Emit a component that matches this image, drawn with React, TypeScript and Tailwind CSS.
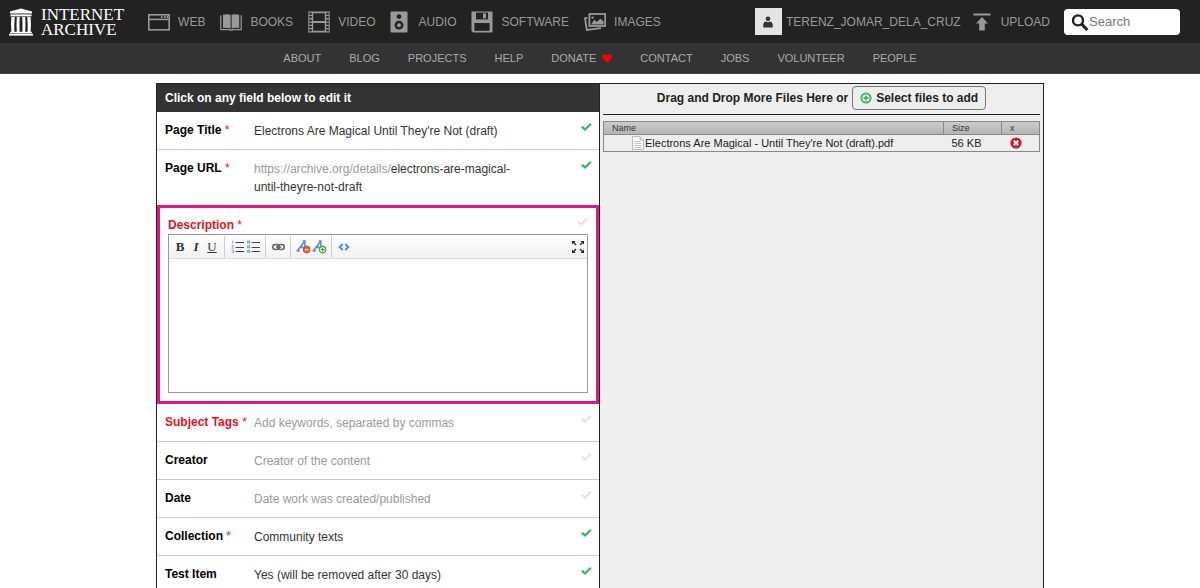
import React from 'react'

interface IconProps {
    className?: string
}

function TempleLogo() {
    return (
        <svg viewBox="0 0 24 28" className="h-7 w-6" fill="#fff" aria-hidden="true">
            <path d="M12 0.5 L23 3.6 V5.6 H1 V3.6 Z" />
            <rect x="1.5" y="6.4" width="21" height="2" />
            <path d="M2.4 9 H5.8 Q5 16 5.4 24 H2.4 Q1.6 16 2.4 9 Z" />
            <path d="M7.8 9 H10.8 Q10.2 16 10.6 24 H7.8 Q7.2 16 7.8 9 Z" />
            <path d="M13.2 9 H16.2 Q16.8 16 16.2 24 H13.4 Q13.8 16 13.2 9 Z" />
            <path d="M18.2 9 H21.6 Q22.4 16 21.6 24 H18.6 Q19 16 18.2 9 Z" />
            <rect x="1.2" y="23.8" width="21.6" height="1.6" />
            <rect x="0" y="25.8" width="24" height="1.8" />
        </svg>
    )
}

function WebIcon() {
    return (
        <svg viewBox="0 0 22 22" className="h-[22px] w-[22px]" fill="none" stroke="#999" strokeWidth="1.6" aria-hidden="true">
            <rect x="0.8" y="3.8" width="20.4" height="15" />
            <path d="M1 8.4 H21" />
            <path d="M13 6.1 H14.5 M16 6.1 H17.5 M18.6 6.1 H20" strokeWidth="2" />
        </svg>
    )
}

function BooksIcon() {
    return (
        <svg viewBox="0 0 22 22" className="h-[22px] w-[22px]" fill="#999" aria-hidden="true">
            <path d="M3 3.8 Q7 2.8 10.6 3.8 V17.4 Q7 16.4 3 17 Z" />
            <path d="M11.6 3.8 Q15 2.8 19.2 3.8 V17 Q15 16.4 11.6 17.4 Z" />
            <path d="M1.8 5 H0.8 V18.6 H9 Q11 19.6 13 18.6 H21.2 V5 H20.2" fill="none" stroke="#999" strokeWidth="1.2" />
        </svg>
    )
}

function VideoIcon() {
    return (
        <svg viewBox="0 0 22 22" className="h-[22px] w-[22px]" fill="none" stroke="#999" aria-hidden="true">
            <path d="M4.5 1 V21 M17.5 1 V21" strokeWidth="1.4" />
            <path d="M4 1.4 H18 M4 11 H18 M4 20.6 H18" strokeWidth="1.8" />
            <path d="M0.8 0.4 V21.6 M21.2 0.4 V21.6" strokeWidth="1" />
            <path d="M2.6 0.5 V21.5 M19.4 0.5 V21.5" strokeWidth="3" strokeDasharray="1.3 2" />
        </svg>
    )
}

function AudioIcon() {
    return (
        <svg viewBox="0 0 20 22" className="h-[22px] w-5" aria-hidden="true">
            <rect x="0.5" y="0.5" width="17" height="21" rx="1" fill="#999" />
            <circle cx="9" cy="5.6" r="2.4" fill="#222" />
            <circle cx="9" cy="14.2" r="4.4" fill="#222" />
            <circle cx="9" cy="14.2" r="2" fill="#999" />
        </svg>
    )
}

function SoftwareIcon() {
    return (
        <svg viewBox="0 0 22 22" className="h-[22px] w-[22px]" aria-hidden="true">
            <path d="M0.5 0.5 H21.5 V21.5 H2 L0.5 20 Z" fill="#999" />
            <rect x="5" y="1.6" width="12" height="6.8" fill="#222" />
            <rect x="12" y="2.4" width="3" height="5" fill="#999" />
            <rect x="3.4" y="12" width="15.2" height="7.8" fill="#222" />
        </svg>
    )
}

function ImagesIcon() {
    return (
        <svg viewBox="0 0 22 22" className="h-[22px] w-[22px]" fill="none" stroke="#999" strokeWidth="1.8" aria-hidden="true">
            <rect x="5.4" y="3" width="15.8" height="12" />
            <path d="M3.4 7 L1 7.3 L2.8 19 L17 17.2" />
            <path d="M7 13.6 L10.4 8.6 L12.6 11 L16.4 7.8 L19.6 10.6 V13.6 Z" fill="#999" stroke="none" />
            <circle cx="8.6" cy="6.6" r="1.2" fill="#999" stroke="none" />
        </svg>
    )
}

function UploadIcon() {
    return (
        <svg viewBox="0 0 18 18" className="h-[18px] w-[18px]" fill="#999" aria-hidden="true">
            <rect x="0.5" y="0.5" width="17" height="2" />
            <path d="M9 4 L15 10.6 H11.8 V17.6 H6.2 V10.6 H3 Z" />
        </svg>
    )
}

function PersonIcon() {
    return (
        <svg viewBox="0 0 12 12" className="h-3 w-3" fill="#333" aria-hidden="true">
            <circle cx="6" cy="2.8" r="2.3" />
            <path d="M1.2 11.5 Q0.8 5.8 4 5.6 Q6 6.8 8 5.6 Q11.2 5.8 10.8 11.5 Z" />
        </svg>
    )
}

function SearchIcon() {
    return (
        <svg viewBox="0 0 18 18" className="h-[18px] w-[18px] shrink-0" fill="none" stroke="#222" aria-hidden="true">
            <circle cx="7" cy="7.4" r="5" strokeWidth="2.4" />
            <path d="M10.6 11 L16.4 17" strokeWidth="3" />
        </svg>
    )
}

function HeartIcon() {
    return (
        <svg viewBox="0 0 10 9" className="h-[9px] w-[10px]" fill="#f00" aria-hidden="true">
            <path d="M5 8.8 L1 4.8 Q-0.4 2.9 0.8 1.2 Q2.9 -0.7 5 1.6 Q7.1 -0.7 9.2 1.2 Q10.4 2.9 9 4.8 Z" />
        </svg>
    )
}

function CheckIcon({ className }: IconProps) {
    return (
        <svg viewBox="0 0 12 10" className={className} fill="none" stroke="currentColor" strokeWidth="2.4" aria-hidden="true">
            <path d="M1 4.6 L4.4 7.8 L10.8 1.4" />
        </svg>
    )
}

function OrderedListIcon() {
    return (
        <svg viewBox="0 0 13 13" className="h-[13px] w-[13px]" aria-hidden="true">
            <path d="M4.5 2.5 H13 M4.5 7.5 H13 M4.5 11.5 H13" stroke="#444" />
            <path d="M1.8 0.5 V3.4 M0.8 5.6 H2.4 L0.8 8.2 H2.6 M0.8 10 H2.4 V12.6 H0.8" fill="none" stroke="#7c9bd0" strokeWidth="0.9" />
        </svg>
    )
}

function BulletListIcon() {
    return (
        <svg viewBox="0 0 13 13" className="h-[13px] w-[13px]" aria-hidden="true">
            <path d="M4.5 2.5 H13 M4.5 7.5 H13 M4.5 11.5 H13" stroke="#444" />
            <g fill="#b9cdf0" stroke="#6f90c9" strokeWidth="0.8">
                <rect x="0.6" y="1" width="2" height="2" />
                <rect x="0.6" y="5.8" width="2" height="2" />
                <rect x="0.6" y="10.2" width="2" height="2" />
            </g>
        </svg>
    )
}

function LinkIcon() {
    return (
        <svg viewBox="0 0 13 8" className="h-2 w-[13px]" fill="none" stroke="#666" strokeWidth="1.5" aria-hidden="true">
            <rect x="0.8" y="1.4" width="6.4" height="5" rx="2.5" />
            <rect x="5.8" y="1.4" width="6.4" height="5" rx="2.5" />
            <path d="M3.8 4 H9.2" />
        </svg>
    )
}

function FontFormatIcon({ plus }: { plus: boolean }) {
    return (
        <svg viewBox="0 0 15 14" className="h-[14px] w-[15px]" aria-hidden="true">
            <path d="M0.6 10.8 H3.6 M1.6 10.4 L8.6 1.4 L9.6 10.4 M4.2 7.4 H9 M6.8 1.2 H9.6" fill="none" stroke="#5a8fd0" strokeWidth="1.7" />
            <circle cx="10.6" cy="9.6" r="3.2" fill={plus ? '#e8f5df' : '#e8672a'} stroke={plus ? '#4d9a35' : '#cf5014'} strokeWidth="1.2" />
            <path d="M8.8 9.6 H12.4" stroke={plus ? '#4d9a35' : '#fff'} strokeWidth="1.2" />
            {plus && <path d="M10.6 7.8 V11.4" stroke="#4d9a35" strokeWidth="1.2" />}
        </svg>
    )
}

function CodeIcon() {
    return (
        <svg viewBox="0 0 12 8" className="h-2 w-3" fill="none" stroke="#3f8fdc" strokeWidth="1.8" aria-hidden="true">
            <path d="M4.8 1 L1.6 4 L4.8 7 M7.2 1 L10.4 4 L7.2 7" />
        </svg>
    )
}

function ExpandIcon() {
    return (
        <svg viewBox="0 0 14 14" className="h-[14px] w-[14px]" fill="#222" stroke="#222" aria-hidden="true">
            <path d="M1 1 H4.6 L1 4.6 Z M13 1 V4.6 L9.4 1 Z M1 13 V9.4 L4.6 13 Z M13 13 H9.4 L13 9.4 Z" stroke="none" />
            <path d="M2 2 L5 5 M12 2 L9 5 M2 12 L5 9 M12 12 L9 9" strokeWidth="1.2" />
        </svg>
    )
}

function AddIcon() {
    return (
        <svg viewBox="0 0 12 12" className="h-3 w-3" aria-hidden="true">
            <circle cx="6" cy="6" r="4.6" fill="#fff" stroke="#46b467" strokeWidth="2" />
            <path d="M6 3.4 V8.6 M3.4 6 H8.6" stroke="#46b467" strokeWidth="1.8" />
        </svg>
    )
}

function RemoveIcon() {
    return (
        <svg viewBox="0 0 12 12" className="h-3 w-3" aria-hidden="true">
            <circle cx="6" cy="6" r="5.6" fill="#d9132c" />
            <path d="M3.8 3.8 L8.2 8.2 M8.2 3.8 L3.8 8.2" stroke="#fff" strokeWidth="2" />
        </svg>
    )
}

function DocIcon() {
    return (
        <svg viewBox="0 0 12 14" className="h-[14px] w-3" aria-hidden="true">
            <path d="M0.5 0.5 H8 L11.5 4 V13.5 H0.5 Z" fill="#fdfdfd" stroke="#bbb" />
            <path d="M8 0.5 V4 H11.5" fill="#ddd" stroke="#bbb" />
            <path d="M2.5 5.5 H8.5 M2.5 7.5 H9.5 M2.5 9.5 H9.5 M2.5 11.5 H9.5" stroke="#c4c4c4" />
        </svg>
    )
}

const mediaLinks = [
    { name: 'WEB', icon: <WebIcon /> },
    { name: 'BOOKS', icon: <BooksIcon /> },
    { name: 'VIDEO', icon: <VideoIcon /> },
    { name: 'AUDIO', icon: <AudioIcon /> },
    { name: 'SOFTWARE', icon: <SoftwareIcon /> },
    { name: 'IMAGES', icon: <ImagesIcon /> },
]

const subLinks = ['ABOUT', 'BLOG', 'PROJECTS', 'HELP', 'DONATE', 'CONTACT', 'JOBS', 'VOLUNTEER', 'PEOPLE']

function Header() {
    return (
        <header>
            <div className="flex h-[43px] items-center bg-[#222] pl-[9px] pr-5 text-xs text-[#999]">
                <a href="#" className="mr-6 flex items-center gap-2 text-white">
                    <TempleLogo />
                    <span className="flex flex-col font-['Liberation_Serif',serif] text-[17px] leading-[15px]">
                        <span>INTERNET</span>
                        <span>ARCHIVE</span>
                    </span>
                </a>
                <nav className="flex items-center gap-[15px]">
                    {mediaLinks.map(({ name, icon }) => (
                        <a key={name} href="#" className="flex items-center gap-2">
                            {icon}
                            {name}
                        </a>
                    ))}
                </nav>
                <div className="ml-auto flex items-center">
                    <a href="#" className="flex items-center gap-1">
                        <span className="flex h-[27px] w-[27px] items-center justify-center bg-[#e4e4e4]">
                            <PersonIcon />
                        </span>
                        TERENZ_JOMAR_DELA_CRUZ
                    </a>
                    <a href="#" className="ml-3 flex items-center gap-2.5">
                        <UploadIcon />
                        UPLOAD
                    </a>
                    <label className="ml-[14px] flex h-[26px] w-[116px] items-center rounded bg-white pl-[7px]">
                        <SearchIcon />
                        <input
                            type="text"
                            placeholder="Search"
                            aria-label="Search"
                            className="w-full min-w-0 text-[13px] text-[#333] outline-none placeholder:text-[#777]"
                        />
                    </label>
                </div>
            </div>
            <nav className="flex h-[31px] items-center justify-center gap-7 border-b border-[#444] bg-[#333] text-[11px] text-[#aaa]">
                {subLinks.map((name) => (
                    <a key={name} href="#" className="flex items-center gap-1.5">
                        {name}
                        {name === 'DONATE' && <HeartIcon />}
                    </a>
                ))}
            </nav>
        </header>
    )
}

interface FieldRowProps {
    label: string
    required?: boolean
    missing?: boolean
    done?: boolean
    borderless?: boolean
    children: React.ReactNode
}

function FieldRow({ label, required, missing, done, borderless, children }: FieldRowProps) {
    return (
        <div className={`flex pb-[9px] pl-2 pr-[7px] pt-[10px] text-xs leading-[18px] ${borderless ? '' : 'border-b border-[#ccc]'}`}>
            <div className={`w-[89px] shrink-0 whitespace-nowrap font-bold leading-4 ${missing ? 'text-[#e8101c]' : 'text-black'}`}>
                {label}
                {required && <span className="font-normal text-[#e8101c]"> *</span>}
            </div>
            <div className={`w-[280px] ${done ? 'text-[#333]' : 'text-[#999]'}`}>{children}</div>
            <CheckIcon className={`ml-auto h-[10px] w-[11px] ${done ? 'text-[#3bb35f]' : 'text-[#e4e4e4]'}`} />
        </div>
    )
}

function ToolButton({ title, children }: { title: string; children: React.ReactNode }) {
    return (
        <button type="button" aria-label={title} className="flex h-5 w-4 items-center justify-center font-['Liberation_Serif',serif] text-[13px] text-[#333]">
            {children}
        </button>
    )
}

function ToolDivider() {
    return <span className="mx-1 h-[22px] w-px bg-[#ccc]" />
}

function DescriptionEditor() {
    return (
        <div className="border-[3px] border-[#e0158a] px-2 pb-2 pt-[9px]">
            <div className="flex h-[17px] justify-between text-xs">
                <label htmlFor="description" className="font-bold text-[#e8101c]">
                    Description <span className="font-normal">*</span>
                </label>
                <CheckIcon className="h-[10px] w-[11px] text-[#e4e4e4]" />
            </div>
            <div className="border border-[#999]">
                <div className="flex h-6 items-center border-b border-[#ddd] bg-linear-to-b from-white to-[#f1f1f1] pl-[3px] pr-px">
                    <ToolButton title="Bold"><b>B</b></ToolButton>
                    <ToolButton title="Italic"><i className="font-bold">I</i></ToolButton>
                    <ToolButton title="Underline"><u>U</u></ToolButton>
                    <ToolDivider />
                    <ToolButton title="Ordered list"><OrderedListIcon /></ToolButton>
                    <ToolButton title="Bulleted list"><BulletListIcon /></ToolButton>
                    <ToolDivider />
                    <ToolButton title="Link"><LinkIcon /></ToolButton>
                    <ToolDivider />
                    <ToolButton title="Remove formatting"><FontFormatIcon plus={false} /></ToolButton>
                    <ToolButton title="Add formatting"><FontFormatIcon plus /></ToolButton>
                    <ToolDivider />
                    <ToolButton title="Edit HTML"><CodeIcon /></ToolButton>
                    <span className="ml-auto" />
                    <ToolButton title="Full screen"><ExpandIcon /></ToolButton>
                </div>
                <textarea id="description" className="block h-[133px] w-full resize-none p-2 text-xs outline-none" />
            </div>
        </div>
    )
}

function MetadataForm() {
    return (
        <section className="w-1/2 border-r border-[#222] bg-white">
            <h1 className="h-7 bg-[#333] pl-2 text-xs font-bold leading-7 text-white">Click on any field below to edit it</h1>
            <FieldRow label="Page Title" required done>Electrons Are Magical Until They're Not (draft)</FieldRow>
            <FieldRow label="Page URL" required done borderless>
                <span className="text-[#999]">https://archive.org/details/</span>electrons-are-magical-until-theyre-not-draft
            </FieldRow>
            <DescriptionEditor />
            <FieldRow label="Subject Tags" required missing>Add keywords, separated by commas</FieldRow>
            <FieldRow label="Creator">Creator of the content</FieldRow>
            <FieldRow label="Date">Date work was created/published</FieldRow>
            <FieldRow label="Collection" required done>Community texts</FieldRow>
            <FieldRow label="Test Item" done borderless>Yes (will be removed after 30 days)</FieldRow>
        </section>
    )
}

function FilePanel() {
    return (
        <section className="w-1/2 px-[3px] pt-[2px]">
            <div className="flex items-center justify-center gap-1 border-b border-[#222] pb-1 text-xs font-bold text-[#222]">
                Drag and Drop More Files Here or
                <button type="button" className="flex h-6 items-center gap-1 rounded-sm border border-[#777] px-[7px] font-bold">
                    <AddIcon />
                    Select files to add
                </button>
            </div>
            <table className="mt-[6px] w-full table-fixed border-collapse border border-[#888] text-[11px] leading-4 text-[#222]">
                <thead>
                    <tr className="h-[13px] border-b border-[#888] bg-linear-to-b from-[#ccc] to-[#b4b4b4] text-left text-[9px] leading-3 text-[#333]">
                        <th className="pl-2 font-normal">Name</th>
                        <th className="w-[58px] border-l border-[#888] pl-2 font-normal">Size</th>
                        <th className="w-[38px] border-l border-[#888] pl-2 font-normal">x</th>
                    </tr>
                </thead>
                <tbody>
                    <tr className="h-[17px]">
                        <td className="pl-7">
                            <span className="flex items-center gap-px whitespace-nowrap">
                                <DocIcon />
                                Electrons Are Magical - Until They're Not (draft).pdf
                            </span>
                        </td>
                        <td className="pl-2">56 KB</td>
                        <td className="pl-2">
                            <button type="button" aria-label="Remove file" className="block">
                                <RemoveIcon />
                            </button>
                        </td>
                    </tr>
                </tbody>
            </table>
        </section>
    )
}

export default function App() {
    return (
        <div className="flex min-h-screen flex-col bg-white font-['Liberation_Sans',Arial,sans-serif]">
            <Header />
            <main className="mx-auto mt-[9px] flex w-full max-w-[888px] grow border-x border-t border-[#222] bg-[#eee]">
                <MetadataForm />
                <FilePanel />
            </main>
        </div>
    )
}
